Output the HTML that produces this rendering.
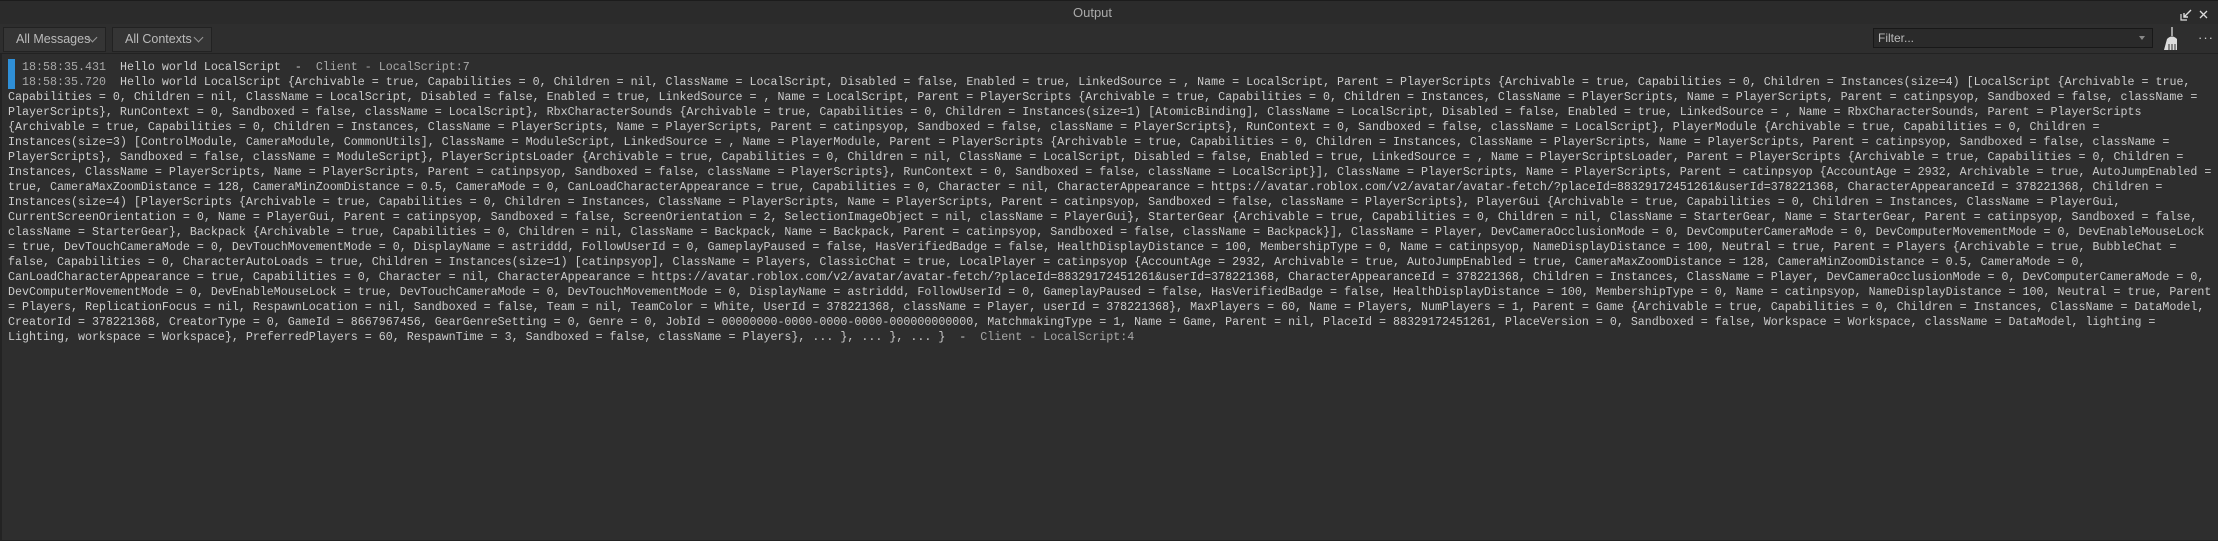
<!DOCTYPE html>
<html><head><meta charset="utf-8"><style>
*{margin:0;padding:0;box-sizing:border-box}
body{width:2218px;height:541px;background:#2e2e2e;overflow:hidden;font-family:"Liberation Sans",sans-serif;position:relative}
.title{position:absolute;left:0;top:0;width:2218px;height:24px;background:#2b2b2b;border-top:1px solid #1c1c1c}
.title span{position:absolute;left:1073px;top:4px;color:#aaa;font-size:13px}
.tb{position:absolute;left:0;top:24px;width:2218px;height:30px;background:#2e2e2e;border-bottom:1px solid #222}
.dd{position:absolute;top:3px;height:25px;background:#353535;border:1px solid #222;color:#bbb;font-size:12.5px;line-height:23px;padding-left:12px}
.dd i{position:absolute;right:9px;top:6px;width:7px;height:7px;border-right:1.3px solid #999;border-bottom:1.3px solid #999;transform:rotate(45deg)}
.filter{position:absolute;left:1873px;top:4px;width:280px;height:20px;background:#2a2a2a;border:1px solid #181818;color:#bbb;font-size:12px;line-height:18px;padding-left:4px}
.filter b{position:absolute;right:7px;top:7px;border-left:3px solid transparent;border-right:3px solid transparent;border-top:4px solid #888}
.out{position:absolute;left:0;top:54px;width:2218px;height:487px;background:#2e2e2e;border-left:2px solid #232323;border-bottom:1px solid #232323}
.txt{position:absolute;left:6px;top:6px;font-family:"Liberation Mono",monospace;font-size:11.67px;line-height:15px;color:#cccccc;white-space:pre}
.bar{position:absolute;left:6px;top:5px;width:7px;height:30px;background:#2f8fd6}
.g{color:#a8a8a8}
</style></head><body>
<div class="title"><span>Output</span>
<svg style="position:absolute;left:2180px;top:8px" width="12" height="12" viewBox="0 0 12 12"><path d="M1 5v6h6" fill="none" stroke="#ddd" stroke-width="1.2"/><path d="M11 1L4 8M4 4v4h4" fill="none" stroke="#ddd" stroke-width="1.4"/></svg>
<svg style="position:absolute;left:2199px;top:9px" width="9" height="9" viewBox="0 0 9 9"><path d="M1 1l7 7M8 1L1 8" stroke="#ddd" stroke-width="1.3"/></svg>
</div>
<div class="tb">
<div class="dd" style="left:3px;width:103px">All Messages<i></i></div>
<div class="dd" style="left:112px;width:100px">All Contexts<i></i></div>
<div class="filter">Filter...<b></b></div>
<svg style="position:absolute;left:2163px;top:3px" width="18" height="24" viewBox="0 0 18 24"><path d="M9 0v9" stroke="#ddd" stroke-width="1.3"/><path d="M4 12q5-5 10 0v11H1z" fill="#ddd"/><path d="M6 17v6M9 17v6M12 17v6" stroke="#2e2e2e" stroke-width="1"/></svg>
<span style="position:absolute;left:2198px;top:6px;color:#ccc;font-size:13px;letter-spacing:1px">···</span>
</div>
<div class="out">
<div class="bar"></div>
<div class="txt">  <span class="g">18:58:35.431</span>  Hello world LocalScript  -  <span class="g">Client - LocalScript:7</span>
  <span class="g">18:58:35.720</span>  Hello world LocalScript {Archivable = true, Capabilities = 0, Children = nil, ClassName = LocalScript, Disabled = false, Enabled = true, LinkedSource = , Name = LocalScript, Parent = PlayerScripts {Archivable = true, Capabilities = 0, Children = Instances(size=4) [LocalScript {Archivable = true,
Capabilities = 0, Children = nil, ClassName = LocalScript, Disabled = false, Enabled = true, LinkedSource = , Name = LocalScript, Parent = PlayerScripts {Archivable = true, Capabilities = 0, Children = Instances, ClassName = PlayerScripts, Name = PlayerScripts, Parent = catinpsyop, Sandboxed = false, className =
PlayerScripts}, RunContext = 0, Sandboxed = false, className = LocalScript}, RbxCharacterSounds {Archivable = true, Capabilities = 0, Children = Instances(size=1) [AtomicBinding], ClassName = LocalScript, Disabled = false, Enabled = true, LinkedSource = , Name = RbxCharacterSounds, Parent = PlayerScripts
{Archivable = true, Capabilities = 0, Children = Instances, ClassName = PlayerScripts, Name = PlayerScripts, Parent = catinpsyop, Sandboxed = false, className = PlayerScripts}, RunContext = 0, Sandboxed = false, className = LocalScript}, PlayerModule {Archivable = true, Capabilities = 0, Children =
Instances(size=3) [ControlModule, CameraModule, CommonUtils], ClassName = ModuleScript, LinkedSource = , Name = PlayerModule, Parent = PlayerScripts {Archivable = true, Capabilities = 0, Children = Instances, ClassName = PlayerScripts, Name = PlayerScripts, Parent = catinpsyop, Sandboxed = false, className =
PlayerScripts}, Sandboxed = false, className = ModuleScript}, PlayerScriptsLoader {Archivable = true, Capabilities = 0, Children = nil, ClassName = LocalScript, Disabled = false, Enabled = true, LinkedSource = , Name = PlayerScriptsLoader, Parent = PlayerScripts {Archivable = true, Capabilities = 0, Children =
Instances, ClassName = PlayerScripts, Name = PlayerScripts, Parent = catinpsyop, Sandboxed = false, className = PlayerScripts}, RunContext = 0, Sandboxed = false, className = LocalScript}], ClassName = PlayerScripts, Name = PlayerScripts, Parent = catinpsyop {AccountAge = 2932, Archivable = true, AutoJumpEnabled =
true, CameraMaxZoomDistance = 128, CameraMinZoomDistance = 0.5, CameraMode = 0, CanLoadCharacterAppearance = true, Capabilities = 0, Character = nil, CharacterAppearance = https://avatar.roblox.com/v2/avatar/avatar-fetch/?placeId=88329172451261&amp;userId=378221368, CharacterAppearanceId = 378221368, Children =
Instances(size=4) [PlayerScripts {Archivable = true, Capabilities = 0, Children = Instances, ClassName = PlayerScripts, Name = PlayerScripts, Parent = catinpsyop, Sandboxed = false, className = PlayerScripts}, PlayerGui {Archivable = true, Capabilities = 0, Children = Instances, ClassName = PlayerGui,
CurrentScreenOrientation = 0, Name = PlayerGui, Parent = catinpsyop, Sandboxed = false, ScreenOrientation = 2, SelectionImageObject = nil, className = PlayerGui}, StarterGear {Archivable = true, Capabilities = 0, Children = nil, ClassName = StarterGear, Name = StarterGear, Parent = catinpsyop, Sandboxed = false,
className = StarterGear}, Backpack {Archivable = true, Capabilities = 0, Children = nil, ClassName = Backpack, Name = Backpack, Parent = catinpsyop, Sandboxed = false, className = Backpack}], ClassName = Player, DevCameraOcclusionMode = 0, DevComputerCameraMode = 0, DevComputerMovementMode = 0, DevEnableMouseLock
= true, DevTouchCameraMode = 0, DevTouchMovementMode = 0, DisplayName = astriddd, FollowUserId = 0, GameplayPaused = false, HasVerifiedBadge = false, HealthDisplayDistance = 100, MembershipType = 0, Name = catinpsyop, NameDisplayDistance = 100, Neutral = true, Parent = Players {Archivable = true, BubbleChat =
false, Capabilities = 0, CharacterAutoLoads = true, Children = Instances(size=1) [catinpsyop], ClassName = Players, ClassicChat = true, LocalPlayer = catinpsyop {AccountAge = 2932, Archivable = true, AutoJumpEnabled = true, CameraMaxZoomDistance = 128, CameraMinZoomDistance = 0.5, CameraMode = 0,
CanLoadCharacterAppearance = true, Capabilities = 0, Character = nil, CharacterAppearance = https://avatar.roblox.com/v2/avatar/avatar-fetch/?placeId=88329172451261&amp;userId=378221368, CharacterAppearanceId = 378221368, Children = Instances, ClassName = Player, DevCameraOcclusionMode = 0, DevComputerCameraMode = 0,
DevComputerMovementMode = 0, DevEnableMouseLock = true, DevTouchCameraMode = 0, DevTouchMovementMode = 0, DisplayName = astriddd, FollowUserId = 0, GameplayPaused = false, HasVerifiedBadge = false, HealthDisplayDistance = 100, MembershipType = 0, Name = catinpsyop, NameDisplayDistance = 100, Neutral = true, Parent
= Players, ReplicationFocus = nil, RespawnLocation = nil, Sandboxed = false, Team = nil, TeamColor = White, UserId = 378221368, className = Player, userId = 378221368}, MaxPlayers = 60, Name = Players, NumPlayers = 1, Parent = Game {Archivable = true, Capabilities = 0, Children = Instances, ClassName = DataModel,
CreatorId = 378221368, CreatorType = 0, GameId = 8667967456, GearGenreSetting = 0, Genre = 0, JobId = 00000000-0000-0000-0000-000000000000, MatchmakingType = 1, Name = Game, Parent = nil, PlaceId = 88329172451261, PlaceVersion = 0, Sandboxed = false, Workspace = Workspace, className = DataModel, lighting =
Lighting, workspace = Workspace}, PreferredPlayers = 60, RespawnTime = 3, Sandboxed = false, className = Players}, ... }, ... }, ... }  -  <span class="g">Client - LocalScript:4</span></div>
</div>
</body></html>
